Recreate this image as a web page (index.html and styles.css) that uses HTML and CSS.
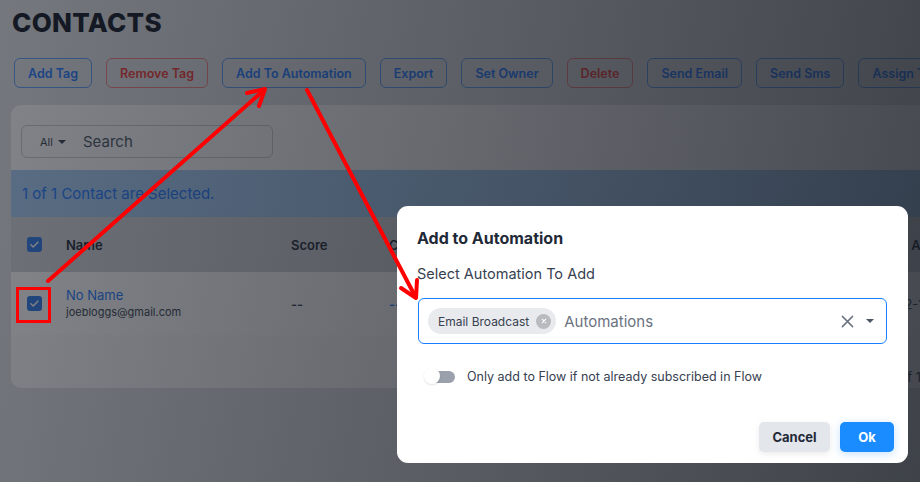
FILE: index.html
```html
<!DOCTYPE html>
<html>
<head>
<meta charset="utf-8">
<link rel="stylesheet" href="styles.css">
</head>
<body>
<div class="page">
  <h1 class="title">CONTACTS</h1>
  <div class="toolbar">
    <button class="tb">Add Tag</button>
    <button class="tb red">Remove Tag</button>
    <button class="tb">Add To Automation</button>
    <button class="tb">Export</button>
    <button class="tb">Set Owner</button>
    <button class="tb red">Delete</button>
    <button class="tb">Send Email</button>
    <button class="tb">Send Sms</button>
    <button class="tb">Assign To</button>
  </div>
  <div class="card">
    <div class="search">
      <span class="all">All <span class="caret-s"></span></span>
      <span class="search-ph">Search</span>
    </div>
    <div class="banner">1 of 1 Contact are Selected.</div>
    <div class="trow thead">
      <span class="cb"><svg viewBox="0 0 16 16" width="15" height="15"><path d="M4.2 8.3l2.4 2.4 5-5.2" fill="none" stroke="#fff" stroke-width="1.6" stroke-linecap="round" stroke-linejoin="round"/></svg></span>
      <span>Name</span>
      <span>Score</span>
      <span>Contact</span>
      <span></span>
      <span>Created At</span>
    </div>
    <div class="trow tbody">
      <span class="cb"><svg viewBox="0 0 16 16" width="15" height="15"><path d="M4.2 8.3l2.4 2.4 5-5.2" fill="none" stroke="#fff" stroke-width="1.6" stroke-linecap="round" stroke-linejoin="round"/></svg></span>
      <span class="namecell"><span class="nm">No Name</span><span class="em">joebloggs@gmail.com</span></span>
      <span class="dash">--</span>
      <span class="dash blue">--</span>
      <span></span>
      <span class="date">2024-02-12</span>
    </div>
    <div class="tfoot">Page 1 of 1</div>
  </div>
</div>

<div class="overlay"></div>

<div class="modal">
  <h2 class="m-title">Add to Automation</h2>
  <div class="m-label">Select Automation To Add</div>
  <div class="select">
    <span class="chip">Email Broadcast <span class="chip-x"><svg viewBox="0 0 10 10" width="6" height="6"><path d="M2 2l6 6M8 2l-6 6" stroke="#fff" stroke-width="1.8" stroke-linecap="round"/></svg></span></span>
    <span class="ph">Automations</span>
    <span class="clear"><svg viewBox="0 0 14 14" width="13" height="13"><path d="M1.5 1.5l11 11M12.5 1.5l-11 11" stroke="#6b7280" stroke-width="1.6" stroke-linecap="round"/></svg></span>
    <span class="caret"></span>
  </div>
  <div class="toggle-row">
    <span class="toggle"><span class="knob"></span></span>
    <span class="t-text">Only add to Flow if not already subscribed in Flow</span>
  </div>
  <div class="actions">
    <button class="btn cancel">Cancel</button>
    <button class="btn ok">Ok</button>
  </div>
</div>

<svg class="annot" width="920" height="482" viewBox="0 0 920 482">
  <g fill="none" stroke="#ff0000" stroke-width="4" stroke-linecap="round" stroke-linejoin="round">
    <line x1="48" y1="281" x2="263" y2="91"/>
    <polyline points="247,93 265,89 259,106"/>
    <line x1="307" y1="90" x2="415" y2="296"/>
    <polyline points="401,288 416,298 417,280"/>
  </g>
  <rect x="17.5" y="288.5" width="32" height="33" fill="none" stroke="#ff0000" stroke-width="3"/>
</svg>
</body>
</html>
```

FILE: styles.css
```css
* { box-sizing: border-box; }
html, body {
  margin: 0;
  width: 920px;
  height: 482px;
  overflow: hidden;
}
body {
  background: #dfe1e4;
  font-family: "Inter", "Open Sans", sans-serif;
  position: relative;
}
.page {
  padding: 7px 0 0 12px;
  width: 980px;
}
.title {
  margin: 0;
  font-size: 26px;
  font-weight: 800;
  line-height: 32px;
  color: #111827;
  letter-spacing: 0.3px;
}
.toolbar {
  margin-top: 19px;
  display: flex;
  gap: 14px;
  padding-left: 2px;
}
.tb {
  height: 30px;
  padding: 0 13px;
  border: 1px solid #5b9cf5;
  border-radius: 6px;
  background: transparent;
  color: #1f78ff;
  font-family: inherit;
  font-size: 12.5px;
  font-weight: 600;
  white-space: nowrap;
}
.tb.red {
  border-color: #f08080;
  color: #f03a3a;
}
.card {
  margin-top: 17px;
  margin-left: -1px;
  width: 960px;
  height: 283px;
  background: #fbfbfc;
  border-radius: 10px;
  display: flex;
  flex-direction: column;
}
.search {
  margin: 20px 0 0 10px;
  width: 252px;
  height: 33px;
  border: 1px solid #c9ccd1;
  border-radius: 6px;
  display: flex;
  align-items: center;
  padding-left: 18px;
}
.all {
  font-size: 11px;
  color: #374151;
  display: flex;
  align-items: center;
  gap: 5px;
  width: 43px;
}
.caret-s {
  width: 0; height: 0;
  border-left: 4px solid transparent;
  border-right: 4px solid transparent;
  border-top: 4px solid #374151;
}
.search-ph {
  font-size: 15px;
  color: #4b5563;
}
.banner {
  margin-top: 12px;
  height: 47px;
  background: #a6ccf4;
  color: #1f78ff;
  font-size: 15px;
  display: flex;
  align-items: center;
  padding-left: 11px;
}
.trow {
  display: grid;
  grid-template-columns: 39px 225px 98px 120px 1fr 113px;
  align-items: center;
  padding-left: 16px;
}
.thead {
  height: 55px;
  background: #d3d6da;
  font-size: 13px;
  font-weight: 600;
  color: #1f2937;
}
.tbody {
  height: 63px;
  background: #ffffff;
  font-size: 13px;
}
.cb {
  width: 15px;
  height: 15px;
  border-radius: 3px;
  background: #2f7bea;
  display: flex;
}
.namecell {
  display: flex;
  flex-direction: column;
  gap: 2px;
  margin-top: -2px;
}
.nm { color: #1f78ff; font-size: 13px; }
.em { color: #374151; font-size: 11px; }
.dash { color: #374151; font-weight: 600; }
.dash.blue { color: #1f78ff; }
.date { color: #374151; }
.tfoot {
  margin-top: 34px;
  text-align: right;
  padding-right: 50px;
  font-size: 13px;
  color: #374151;
}
.overlay {
  position: absolute;
  inset: 0;
  background: linear-gradient(100deg, rgba(22,26,34,0.53) 0%, rgba(22,26,34,0.66) 50%, rgba(22,26,34,0.8) 100%);
}
.modal {
  position: absolute;
  left: 397px;
  top: 206px;
  width: 511px;
  height: 257px;
  background: #fff;
  border-radius: 11px;
  padding: 21px 20px 11px 20px;
  display: flex;
  flex-direction: column;
}
.m-title {
  margin: 0;
  font-size: 16px;
  font-weight: 700;
  line-height: 22px;
  color: #1f2937;
}
.m-label {
  margin-top: 15px;
  font-size: 14.5px;
  line-height: 20px;
  color: #374151;
}
.select {
  margin-top: 14px;
  margin-left: 1px;
  width: 469px;
  height: 46px;
  border: 1.5px solid #1a7fff;
  border-radius: 6px;
  display: flex;
  align-items: center;
  padding: 0 9px;
}
.chip {
  height: 26px;
  background: #e9eaed;
  border-radius: 13px;
  display: flex;
  align-items: center;
  padding: 0 5px 0 10px;
  font-size: 12px;
  color: #374151;
  gap: 7px;
}
.chip-x {
  width: 15px;
  height: 15px;
  border-radius: 50%;
  background: #b7babf;
  display: flex;
  align-items: center;
  justify-content: center;
}
.ph {
  margin-left: 8px;
  font-size: 15px;
  color: #6b7280;
  flex: 1;
}
.clear { display: flex; margin-right: 12px; }
.caret {
  width: 0; height: 0;
  border-left: 4.5px solid transparent;
  border-right: 4.5px solid transparent;
  border-top: 4.5px solid #4b5563;
  margin-right: 3px;
}
.toggle-row {
  margin-top: 25px;
  display: flex;
  align-items: center;
  padding-left: 8px;
}
.toggle {
  width: 32px;
  height: 14px;
  position: relative;
  display: block;
}
.toggle::before {
  content: "";
  position: absolute;
  left: 6px;
  right: 2px;
  top: 1px;
  bottom: 1px;
  background: #9aa1ad;
  border-radius: 7px;
}
.knob {
  position: absolute;
  left: -1px;
  top: -2px;
  width: 16px;
  height: 16px;
  border-radius: 50%;
  background: #fff;
  box-shadow: 0 1px 2px rgba(0,0,0,0.12);
}
.t-text {
  margin-left: 10px;
  font-size: 12.5px;
  color: #374151;
}
.actions {
  margin-top: auto;
  display: flex;
  justify-content: flex-end;
  gap: 10px;
  margin-right: -6px;
}
.btn {
  height: 30px;
  border: none;
  border-radius: 5px;
  font-family: inherit;
  font-size: 13px;
  font-weight: 700;
}
.cancel {
  width: 71px;
  background: #e3e6ea;
  color: #1f2937;
  box-shadow: 0 2px 6px rgba(0,0,0,0.08);
}
.ok {
  width: 54px;
  background: #1a8cff;
  color: #fff;
  box-shadow: 0 2px 8px rgba(26,140,255,0.25);
}
.annot {
  position: absolute;
  left: 0;
  top: 0;
}
```
